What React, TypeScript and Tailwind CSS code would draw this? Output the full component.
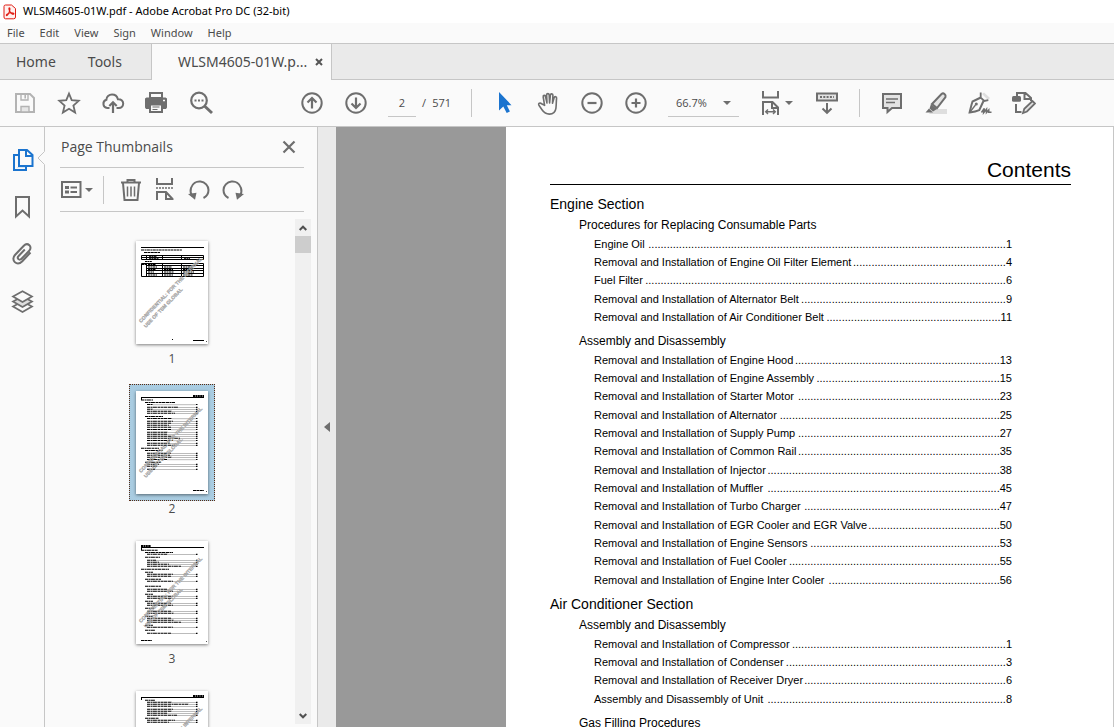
import type { ReactNode } from "react";
import { clsx } from "clsx";

const UI_FONT = "font-['Open_Sans','Noto_Sans',sans-serif]";
const CHROME_FONT = "font-['Noto_Sans','Open_Sans',sans-serif]";
const DOC_FONT = "font-['Liberation_Sans',Arial,sans-serif]";

// dots is the length of the leader between title and page number
type Entry = [title: string, dots: number, page: number];
type Group = { title: string; entries: Entry[] };
type Section = { title: string; groups: Group[] };

const SECTIONS: Section[] = [
  {
    title: "Engine Section",
    groups: [
      {
        title: "Procedures for Replacing Consumable Parts",
        entries: [
          ["Engine Oil", 117, 1],
          ["Removal and Installation of Engine Oil Filter Element", 50, 4],
          ["Fuel Filter", 118, 6],
          ["Removal and Installation of Alternator Belt", 67, 9],
          ["Removal and Installation of Air Conditioner Belt", 57, 11],
        ],
      },
      {
        title: "Assembly and Disassembly",
        entries: [
          ["Removal and Installation of Engine Hood", 67, 13],
          ["Removal and Installation of Engine Assembly", 60, 15],
          ["Removal and Installation of Starter Motor", 66, 23],
          ["Removal and Installation of Alternator", 72, 25],
          ["Removal and Installation of Supply Pump", 66, 27],
          ["Removal and Installation of Common Rail", 66, 35],
          ["Removal and Installation of Injector", 76, 38],
          ["Removal and Installation of Muffler", 76, 45],
          ["Removal and Installation of Turbo Charger", 64, 47],
          ["Removal and Installation of EGR Cooler and EGR Valve", 43, 50],
          ["Removal and Installation of Engine Sensors", 62, 53],
          ["Removal and Installation of Fuel Cooler", 69, 55],
          ["Removal and Installation of Engine Inter Cooler", 56, 56],
        ],
      },
    ],
  },
  {
    title: "Air Conditioner Section",
    groups: [
      {
        title: "Assembly and Disassembly",
        entries: [
          ["Removal and Installation of Compressor", 70, 1],
          ["Removal and Installation of Condenser", 72, 3],
          ["Removal and Installation of Receiver Dryer", 66, 6],
          ["Assembly and Disassembly of Unit", 78, 8],
        ],
      },
      { title: "Gas Filling Procedures", entries: [] },
    ],
  },
];

/* ---------- icons ---------- */

function Icon({ children, className }: { children: ReactNode; className?: string }) {
  return (
    <svg
      viewBox="0 0 24 24"
      className={clsx("size-6 shrink-0", className)}
      fill="none"
      stroke="currentColor"
      strokeWidth="2"
      aria-hidden="true"
    >
      {children}
    </svg>
  );
}

function IconButton({ label, children, className }: { label: string; children: ReactNode; className?: string }) {
  return (
    <button type="button" aria-label={label} className={clsx("flex shrink-0 items-center", className)}>
      {children}
    </button>
  );
}

function Caret() {
  return (
    <svg viewBox="0 0 8 4" className="h-1 w-2 shrink-0" fill="currentColor" aria-hidden="true">
      <path d="M0 0h8L4 4z" />
    </svg>
  );
}

const SaveIcon = () => (
  <Icon className="text-[#b3b3b3]">
    <path d="M3 3h14l4 4v14H3z" />
    <path d="M8 15.5h8V21H8z" fill="#e6e6e6" strokeWidth="1.4" />
    <path d="M8 3v6h7V3" strokeWidth="1.4" />
    <path d="M12.2 4v3.4" strokeWidth="1.6" />
  </Icon>
);

const StarIcon = () => (
  <Icon>
    <path
      d="M12 2.6l2.7 6.6 7 .6-5.3 4.7 1.7 7L12 17.7l-6.1 3.8 1.7-7L2.3 9.8l7-.6z"
      strokeWidth="1.8"
    />
  </Icon>
);

const CloudIcon = () => (
  <Icon>
    <path d="M8.5 17H6.2a4.2 4.2 0 0 1-.8-8.2C5.4 5.8 8 3.6 11 3.6s5.2 1.8 5.9 4.6c3-.3 5.3 1.7 5.3 4.4 0 2.5-1.9 4.4-4.3 4.4h-2.4" />
    <path d="M12 22V11.5M8.3 15l3.7-3.7 3.7 3.7" strokeWidth="2.2" />
  </Icon>
);

const PrintIcon = () => (
  <Icon>
    <path d="M4 1h14v6H4z" fill="currentColor" stroke="none" />
    <path d="M6 3h10v3H6z" fill="#fafafa" stroke="none" />
    <path d="M1.5 6.5h19L22 7.5v9L21 18h-3v-5H4v5H1l-1-1.5v-9z" fill="currentColor" stroke="none" />
    <path d="M5 13.5h12V21H5z" fill="#fafafa" />
    <path d="M7.5 16h7M7.5 18.5h5" strokeWidth="1.2" />
    <path d="M18 9.5h2" stroke="#fafafa" strokeWidth="1.5" />
  </Icon>
);

const SearchIcon = () => (
  <Icon>
    <circle cx="10" cy="9.5" r="7.8" strokeWidth="2.2" />
    <path d="M15.5 15l7.5 7" strokeWidth="3" />
    <path d="M5.5 9.5h2M9 9.5h2M12.5 9.5h2" strokeWidth="1.8" />
  </Icon>
);

const CircleIcon = ({ d }: { d: string }) => (
  <Icon>
    <circle cx="12" cy="12" r="9.7" />
    <path d={d} strokeWidth="2.2" />
  </Icon>
);

const CursorIcon = () => (
  <Icon className="text-[#1b74cf]">
    <path d="M7 1v18.5l4.3-3.9 3.4 6.4 3.2-1.6-3.1-6.2H19.5z" fill="currentColor" stroke="none" />
  </Icon>
);

const HandIcon = () => (
  <Icon>
    <path
      transform="translate(1.3 .8)"
      d="M7.3 13.5L5.9 5.2c-.3-1.9 1.9-2.3 2.3-.5l1.5 6.5-.4-8c0-1.9 2.5-1.9 2.6 0l.4 8 .8-8c.2-1.7 2.6-1.5 2.5.3l-.4 8 1.6-5.5c.5-1.8 2.8-1.3 2.5.5-.4 3-.2 6.5-.7 10-.5 3.6-2.8 5.8-6.5 5.8-4 0-5.7-1.8-7.4-4.3-1-1.5-2.2-3.3-3.1-4.6-1-1.7 1.2-2.8 2.6-1.5z"
      strokeWidth="1.6"
      strokeLinejoin="round"
    />
  </Icon>
);

const FitIcon = () => (
  <Icon>
    <path d="M4 0v6.5h15V0" />
    <path d="M4 24V11h9.5l5.5 5.5V24M13 11v6h6" />
    <path d="M7 20.8h9M9 18.5l-2.3 2.3L9 23M14 18.5l2.3 2.3L14 23" strokeWidth="1.4" />
  </Icon>
);

const KeyboardIcon = () => (
  <Icon>
    <path d="M2 2.5h20v7H2z" fill="#e3e3e3" />
    <path d="M5 6h14" strokeWidth="2" strokeDasharray="2 1.3" />
    <path d="M12 12v9.5M7.5 17.5l4.5 4.3 4.5-4.3" />
  </Icon>
);

const CommentIcon = () => (
  <Icon>
    <path d="M3 3h18v14H12l-4.5 4v-4H3z" fill="#e3e3e3" />
    <path d="M6 8h12M6 11.5h9" strokeWidth="1.3" />
  </Icon>
);

const HighlightIcon = () => (
  <Icon>
    <path d="M8 18h15v5H5z" fill="#dedede" stroke="none" />
    <path d="M8 13L17.5 3q1.5-1.2 3 0t1 3L13 17z" fill="#e3e3e3" />
    <path d="M7 13l6 5-4 2.5-3.5-3z" fill="currentColor" stroke="none" />
    <path d="M5 17.5l4 4H1.5z" fill="currentColor" stroke="none" />
  </Icon>
);

const SignIcon = () => (
  <Icon>
    <path d="M14 3l2-1.5 6 5.5-2 2z" fill="#dedede" stroke="none" />
    <path d="M12.8 6.5L4.5 10.5C3.3 14 2.5 18 1.6 21.4c3.4-.3 6.8-.8 9.6-2.2L15.5 10" />
    <path d="M12.7 1.5v5.2l3.6 3.3 4-.8" strokeWidth="1.8" />
    <path d="M2 21l5.5-7" strokeWidth="1.3" />
    <circle cx="8.3" cy="13" r="1.5" fill="currentColor" stroke="none" />
    <path d="M13.5 21.5l2.8-4-.5 4 2.7-3.2v3.2l2.2-2.5v2.3h2.8" strokeWidth="1.6" />
  </Icon>
);

const EditIcon = () => (
  <Icon>
    <path d="M5 5V2h8.5l5.5 5v3M12.5 2v6H19" />
    <path d="M4 13v8h5.5" />
    <rect x="0" y="5" width="9" height="5.8" rx="1.5" fill="currentColor" stroke="none" />
    <path d="M11 22l1.3-4.2L20.5 10l2.5 2.5-8 8z" fill="#e3e3e3" strokeWidth="1.8" />
  </Icon>
);

const PagesIcon = () => (
  <Icon className="text-[#1b74cf]">
    <path d="M7 7H3v15h12v-3" />
    <path d="M8 2h8l5.5 5v11H8zM15 2v6h6.5" fill="#fafafa" />
    <path d="M6 19.5h8" stroke="#d6e6f5" strokeWidth="1" />
  </Icon>
);

const BookmarkIcon = () => (
  <Icon>
    <path d="M5 2h13v19.5L11.5 15.5 5 21.5z" />
  </Icon>
);

const ClipIcon = () => (
  <Icon>
    <path d="M19.5 10.5l-8.2 8.8c-2.5 2.5-5.5 2.7-7.5.8s-1.9-5 .4-7.4l8.6-8.9c1.8-1.9 4.1-1.9 5.6-.5s1.5 3.7-.2 5.5l-7.7 8c-1 1-2.3 1.1-3.1.3s-.8-2.1.2-3.1l6.2-6.5" />
  </Icon>
);

const LayersIcon = () => (
  <Icon>
    <path d="M2 17.5l9.5 5.5 9.5-5.5-9.5-5z" fill="#fafafa" strokeWidth="1.7" />
    <path d="M2 12.5l9.5 5.5 9.5-5.5-9.5-5z" fill="#dedede" strokeWidth="1.7" />
    <path d="M2 7.5L11.5 13 21 7.5l-9.5-5.3z" fill="#fafafa" strokeWidth="1.7" />
  </Icon>
);

const ListIcon = () => (
  <Icon>
    <path d="M2 4h18.5v15H2z" />
    <path d="M5 9.5h4M5 14h4" strokeWidth="3" />
    <path d="M10.5 9.5h6.5M10.5 14h6.5" strokeWidth="1.8" />
  </Icon>
);

const TrashIcon = () => (
  <Icon>
    <path d="M2 4.500h20M8.500 4V2h7v2" />
    <path d="M4 5l1.500 17h13L20 5" />
    <path d="M8.500 8.500v10M12 8.500v10M15.500 8.500v10" strokeWidth="1.500" />
  </Icon>
);

const SplitIcon = () => (
  <Icon>
    <path d="M4 0v6h15V0" />
    <path d="M3 10h18" strokeWidth="1.5" strokeDasharray="2 1" />
    <path d="M4 22v-8h9l6.5 7v1M13 14v7h6.5" />
  </Icon>
);

const RotateIcon = ({ flip }: { flip?: boolean }) => (
  <Icon>
    <g transform={flip ? "matrix(-1 0 0 1 24 0)" : undefined}>
      <path d="M5.2 18C3.5 15.5 3.2 12.5 4 10c1.5-4.5 5.5-7 9.5-6.5 4.5.5 8 4.5 8 8.5 0 3.5-2 6.5-5 8" />
      <path d="M1 16l8.5-1.3-1.5 7z" fill="currentColor" stroke="none" />
    </g>
  </Icon>
);

const AcrobatIcon = () => (
  <svg viewBox="0 0 14 16" className="h-4 w-[14px] shrink-0 text-[#e01b12]" fill="none" stroke="currentColor" aria-hidden="true">
    <path d="M2.5 1h6L12.5 4.5V13q0 1.800-1.800 1.800H2.500Q1 14.800 1 13V2.500Q1 1 2.500 1z" fill="#fff1ef" />
    <path
      d="M3.500 11.500C2.500 10.800 5.500 9 8 8.800c2.500-.2 3.500 1 2.600 1.400-1 .5-3-1.200-4-3.200-.8-1.700-.9-3.300-.2-3.300s.7 1.500.1 3.600C5.700 9.600 4.300 12 3.500 11.500z"
      strokeWidth="1.1"
    />
  </svg>
);

/* ---------- thumbnails ---------- */

// [y, x, width, leader?]
type Mark = [number, number, number, boolean?];

const MARKS_2: Mark[] = [
  [9, 5, 12], [11.5, 9, 30],
  [13.5, 11, 6, true], [16.3, 11, 31, true], [18.3, 11, 6, true], [20.3, 11, 25, true], [22.3, 11, 28, true],
  [25.5, 9, 18],
  [27.5, 11, 25, true], [30.3, 11, 26, true], [32.3, 11, 24, true], [34.3, 11, 22, true], [36.3, 11, 24, true],
  [38.5, 11, 24, true], [41.3, 11, 21, true], [43.3, 11, 20, true], [45.3, 11, 25, true], [47.3, 11, 33, true],
  [49.5, 11, 26, true], [52.3, 11, 23, true], [54.3, 11, 28, true],
  [57.3, 5, 18], [59.5, 9, 18],
  [62.3, 11, 24, true], [64.3, 11, 23, true], [66.3, 11, 25, true], [68.5, 11, 20, true],
  [71.3, 9, 16], [73.3, 11, 12, true], [75.3, 11, 10, true], [78.3, 11, 8, true],
];

const MARKS_3: Mark[] = [
  [9.3, 5, 17], [11.5, 9, 28], [13.3, 11, 21, true], [16.3, 9, 15],
  [19.3, 11, 9, true], [21.3, 11, 12, true], [23.3, 11, 22, true], [25.3, 11, 34, true],
  [28.3, 5, 28], [31.3, 9, 8], [33.3, 11, 26, true], [35.3, 11, 24, true],
  [38.3, 9, 16], [40.3, 11, 26, true], [45.3, 9, 16], [48.3, 11, 20, true], [50.3, 11, 26, true],
  [53.3, 9, 8], [55.3, 11, 26, true], [57.3, 11, 24, true], [60.3, 9, 8], [62.3, 11, 24, true],
  [64.3, 11, 26, true], [67.3, 9, 9], [70.3, 11, 24, true], [72.3, 11, 27, true], [75.3, 9, 8],
  [77.3, 11, 24, true], [79.3, 11, 27, true], [81.3, 11, 34, true], [84.3, 9, 8], [86.3, 11, 26, true],
  [89.3, 9, 10], [92.3, 11, 24, true],
];

const MARKS_4: Mark[] = [
  [9.3, 9, 10], [11.3, 11, 25, true], [13.3, 11, 42, true], [15.3, 11, 24, true], [18.3, 11, 26, true],
  [20.3, 11, 25, true], [22.3, 11, 20, true], [24.3, 11, 30, true], [27.3, 9, 14],
  [29.3, 11, 28, true], [31.3, 11, 22, true],
];

function Watermark() {
  return (
    <g
      fill="#a3a3a3"
      fillOpacity=".9"
      fontFamily="'Liberation Sans Narrow','Liberation Sans',sans-serif"
      fontSize="5"
      fontWeight="700"
      stroke="#a3a3a3"
      strokeWidth=".3"
    >
      <text transform="translate(5 82) rotate(-46)">CONFIDENTIAL: FOR THE INTERNAL</text>
      <text transform="translate(10 87) rotate(-46)">USE OF TSM GLOBAL</text>
    </g>
  );
}

function TextPage({ marks, headLeft }: { marks: Mark[]; headLeft?: boolean }) {
  return (
    <g stroke="#000" fill="none">
      <path d={headLeft ? "M5 5h10" : "M57 5h11"} strokeWidth="2" strokeDasharray="2 .4" />
      <path d="M5 6.5h63M5.5 6v3" />
      {marks.map(([y, x, w, leader]) => (
        <g key={y}>
          <path d={`M${x} ${y}h${w}`} strokeWidth="1.1" strokeDasharray="3 .5 2 .4 4 .6" />
          {leader && <path d={`M${x + w} ${y + 0.2}H60`} stroke="#777" strokeWidth=".5" />}
          {leader && <path d={`M60 ${y}h1.5`} strokeWidth="1.2" />}
        </g>
      ))}
      <path d={headLeft ? "M5 99.5h11" : "M57 99.5h11"} strokeDasharray="3 .4" />
      <path d="M70 100.5h1" stroke="#555" />
    </g>
  );
}

function TablePage() {
  return (
    <g stroke="#000" fill="none">
      <path d="M5 6.5h63" />
      <path d="M5 9h41" strokeDasharray="3 .5 2 .4" />
      <path d="M8 11.5h16" strokeDasharray="3 .4" />
      <path d="M5.5 14.5h62v4h-62z" />
      <path d="M5 16.5h63M10.5 14v4M26.5 14v4M45.5 14v4" />
      <path d="M13 15.5h8M13 17.5h10M48 17.5h6" strokeWidth=".8" strokeDasharray="2 .5" />
      <path d="M9 20.5h7" strokeDasharray="2 .4" />
      <path d="M5.5 22.500h62v13h-62z" />
      <path d="M10 24.5h58M10 27.5h58M10 29.5h58M10 32.5h58M10.5 22v13M26.5 22v13M45.5 22v13" />
      <path
        d="M6 23.5h4M12 23.5h8M12 26h9M28 26h8M47 26h10M12 28.500h8M28 28.500h9M47 28.500h10M28 31h10M47 31h11M12 31h6M28 34h9M47 34h10M12 34h9"
        strokeDasharray="2 .5"
      />
      <path d="M36 98.5h1M57 99.5h11" />
      <path d="M70 100.5h1" stroke="#555" />
    </g>
  );
}

function Thumbnail({ page, selected, children }: { page: number; selected?: boolean; children: ReactNode }) {
  return (
    <li className="shrink-0">
      <button type="button" aria-label={`Page ${page}`} className="flex flex-col items-center">
        <span
          className={clsx(
            "flex h-[117px] w-[86px] items-center justify-center border border-dotted",
            selected ? "border-[#5a2b12] bg-[#a9cce1]" : "border-transparent",
          )}
        >
          <svg
            viewBox="0 0 72 103"
            className="h-[103px] w-[72px] bg-white shadow-[0_1px_3px_rgba(0,0,0,0.5)]"
            aria-hidden="true"
          >
            {children}
            <Watermark />
          </svg>
        </span>
        <span className="text-xs leading-4 text-[#4b4b4b]">{page}</span>
      </button>
    </li>
  );
}

/* ---------- window parts ---------- */

function TitleBar() {
  return (
    <header className={CHROME_FONT}>
      <div className="flex h-[23px] items-center gap-[6px] bg-white px-[3px]">
        <AcrobatIcon />
        <h1 className="text-[11px] text-black">WLSM4605-01W.pdf - Adobe Acrobat Pro DC (32-bit)</h1>
      </div>
      <nav className="flex h-5 items-center gap-[15px] bg-[#fafafa] px-[7px] text-[11px] text-[#4b4b4b]">
        {["File", "Edit", "View", "Sign", "Window", "Help"].map((m) => (
          <button key={m} type="button">
            {m}
          </button>
        ))}
      </nav>
    </header>
  );
}

function TabBar() {
  return (
    <div className={clsx("flex h-[37px] border-y border-[#c6c6c6] bg-[#eaeaea] text-sm text-[#4b4b4b]", CHROME_FONT)}>
      <button type="button" className="px-4">
        Home
      </button>
      <button type="button" className="pr-[29px] pl-4">
        Tools
      </button>
      <div className="-mb-px flex items-center gap-2 border-x border-[#c6c6c6] bg-[#fafafa] pr-2 pl-[26px]">
        <button type="button">WLSM4605-01W.p...</button>
        <button type="button" aria-label="Close tab">
          <svg viewBox="0 0 8 8" className="size-2" stroke="#555" strokeWidth="2" aria-hidden="true">
            <path d="M1 1l6 6M7 1L1 7" />
          </svg>
        </button>
      </div>
    </div>
  );
}

function Divider() {
  return <span className="h-7 w-px shrink-0 bg-[#c6c6c6]" />;
}

function Toolbar() {
  return (
    <div className="flex h-[47px] items-center gap-[87px] border-b border-[#c6c6c6] bg-[#fafafa] pl-[13px] text-[#6e6e6e]">
      <div className="flex items-center gap-5">
        <IconButton label="Save"><SaveIcon /></IconButton>
        <IconButton label="Star"><StarIcon /></IconButton>
        <IconButton label="Upload to cloud"><CloudIcon /></IconButton>
        <IconButton label="Print"><PrintIcon /></IconButton>
        <IconButton label="Find"><SearchIcon /></IconButton>
      </div>
      <div className="flex items-center gap-5">
        <IconButton label="Previous page"><CircleIcon d="M12 17.5V7.5M7.5 11.5L12 7l4.5 4.5" /></IconButton>
        <IconButton label="Next page"><CircleIcon d="M12 6.5v10M7.5 12.5L12 17l4.5-4.5" /></IconButton>
        <div className="flex items-center gap-[6px] text-[11px] text-[#4b4b4b]">
          <input
            aria-label="Page number"
            defaultValue="2"
            className="h-7 w-7 border-b border-[#c6c6c6] bg-transparent text-center outline-none"
          />
          <span className="flex w-[29px] justify-between">
            <span>/</span>
            <span>571</span>
          </span>
        </div>
        <Divider />
        <IconButton label="Select"><CursorIcon /></IconButton>
        <IconButton label="Pan"><HandIcon /></IconButton>
        <IconButton label="Zoom out"><CircleIcon d="M7.5 12h9" /></IconButton>
        <IconButton label="Zoom in"><CircleIcon d="M7.5 12h9M12 7.5v9" /></IconButton>
        <div className="relative">
          <select
            aria-label="Zoom level"
            className="h-7 w-[71px] appearance-none border-b border-[#c6c6c6] bg-transparent pl-2 text-[11px] text-[#4b4b4b] outline-none"
          >
            <option>66.7%</option>
          </select>
          <span className="pointer-events-none absolute inset-y-0 right-2 flex items-center">
            <Caret />
          </span>
        </div>
        <IconButton label="Fit width" className="gap-[2px] pr-[2px]">
          <FitIcon />
          <Caret />
        </IconButton>
        <IconButton label="Show toolbar"><KeyboardIcon /></IconButton>
        <Divider />
        <IconButton label="Comment"><CommentIcon /></IconButton>
        <IconButton label="Highlight"><HighlightIcon /></IconButton>
        <IconButton label="Sign"><SignIcon /></IconButton>
        <IconButton label="Edit"><EditIcon /></IconButton>
      </div>
    </div>
  );
}

function SideRail() {
  return (
    <nav className="relative flex w-[45px] shrink-0 flex-col gap-[23px] border-r border-[#c6c6c6] pt-[21px] pl-[11px] text-[#6e6e6e]">
      <IconButton label="Page thumbnails"><PagesIcon /></IconButton>
      <IconButton label="Bookmarks"><BookmarkIcon /></IconButton>
      <IconButton label="Attachments"><ClipIcon /></IconButton>
      <IconButton label="Layers"><LayersIcon /></IconButton>
      <svg viewBox="0 0 8 14" className="absolute top-6 -right-px h-[14px] w-2" aria-hidden="true">
        <path d="M8 0L1 7l7 7z" fill="#fafafa" />
        <path d="M7.5.5L1 7l6.5 6.5" fill="none" stroke="#c6c6c6" />
      </svg>
    </nav>
  );
}

function ScrollBar() {
  return (
    <div className="mt-[7px] mb-[3px] flex w-4 shrink-0 flex-col bg-[#f0f0f0] text-[#505050]">
      <button type="button" aria-label="Scroll up" className="flex h-[17px] items-center justify-center">
        <svg viewBox="0 0 8 6" className="h-[6px] w-2" fill="none" stroke="currentColor" strokeWidth="2" aria-hidden="true">
          <path d="M.7 5L4 1.7 7.3 5" />
        </svg>
      </button>
      <span className="h-[17px] bg-[#cdcdcd]" />
      <button type="button" aria-label="Scroll down" className="mt-auto flex h-[17px] items-center justify-center">
        <svg viewBox="0 0 8 6" className="h-[6px] w-2" fill="none" stroke="currentColor" strokeWidth="2" aria-hidden="true">
          <path d="M.7 1L4 4.3 7.3 1" />
        </svg>
      </button>
    </div>
  );
}

function ThumbnailPanel() {
  return (
    <aside className="flex w-[273px] shrink-0 flex-col border-r border-[#c6c6c6] text-[#6e6e6e]">
      <div className="mr-[13px] ml-[15px] flex h-[41px] items-center justify-between border-b border-[#c6c6c6] pr-2 pl-px">
        <h2 className="text-sm text-[#4b4b4b]">Page Thumbnails</h2>
        <button type="button" aria-label="Close panel">
          <svg viewBox="0 0 14 14" className="size-[14px]" stroke="currentColor" strokeWidth="2.2" aria-hidden="true">
            <path d="M1.5 1.5l11 11M12.5 1.5l-11 11" />
          </svg>
        </button>
      </div>
      <div className="mr-[13px] ml-[15px] flex h-11 items-center gap-[10px] border-b border-[#c6c6c6]">
        <IconButton label="Options" className="gap-px">
          <ListIcon />
          <Caret />
        </IconButton>
        <Divider />
        <span className="flex items-center gap-[10px] pl-[5px]">
          <IconButton label="Delete pages"><TrashIcon /></IconButton>
          <IconButton label="Split document"><SplitIcon /></IconButton>
          <IconButton label="Rotate left"><RotateIcon /></IconButton>
          <IconButton label="Rotate right"><RotateIcon flip /></IconButton>
        </span>
      </div>
      <div className="flex min-h-0 flex-1 pr-[6px]">
        <ul className="flex flex-1 flex-col items-center gap-[17px] overflow-hidden pt-[22px] pl-1">
          <Thumbnail page={1}>
            <TablePage />
          </Thumbnail>
          <Thumbnail page={2} selected>
            <TextPage marks={MARKS_2} />
          </Thumbnail>
          <Thumbnail page={3}>
            <TextPage marks={MARKS_3} headLeft />
          </Thumbnail>
          <Thumbnail page={4}>
            <TextPage marks={MARKS_4} />
          </Thumbnail>
        </ul>
        <ScrollBar />
      </div>
    </aside>
  );
}

function TocEntry({ entry: [title, dots, page] }: { entry: Entry }) {
  return (
    <li className="flex whitespace-nowrap leading-[18px] nth-[3n]:leading-[19px]">
      <span>{title}</span>
      <span className="ml-auto">{".".repeat(dots)}</span>
      <span>{page}</span>
    </li>
  );
}

function DocumentPage() {
  return (
    <article className={clsx("w-[608px] shrink-0 overflow-hidden border-r border-[#c6c6c6] bg-white pr-[42px] pl-11 text-black", DOC_FONT)}>
      <h2 className="border-b border-black pt-[29px] text-right text-[21px] leading-7">Contents</h2>
      <div className="pt-[9px] pr-[59px]">
        {SECTIONS.map((s) => (
          <section key={s.title} className="mb-[5px]">
            <h3 className="text-sm leading-[21px]">{s.title}</h3>
            <div className="flex flex-col gap-[5px] pl-[29px]">
              {s.groups.map((g) => (
                <div key={g.title}>
                  <h4 className="text-xs leading-5">{g.title}</h4>
                  <ul className="pl-[15px] text-[11px]">
                    {g.entries.map((e) => (
                      <TocEntry key={e[0]} entry={e} />
                    ))}
                  </ul>
                </div>
              ))}
            </div>
          </section>
        ))}
      </div>
    </article>
  );
}

export default function App() {
  return (
    <div className={clsx("flex h-screen flex-col overflow-hidden bg-[#fafafa]", UI_FONT)}>
      <TitleBar />
      <TabBar />
      <Toolbar />
      <main className="flex min-h-0 flex-1">
        <SideRail />
        <ThumbnailPanel />
        <button type="button" aria-label="Collapse panel" className="flex w-[18px] shrink-0 items-center justify-center bg-[#eaeaea]">
          <svg viewBox="0 0 6 10" className="h-[10px] w-[6px]" fill="#6e6e6e" aria-hidden="true">
            <path d="M6 0v10L0 5z" />
          </svg>
        </button>
        <div className="flex min-w-0 flex-1 justify-end bg-[#999]">
          <DocumentPage />
        </div>
      </main>
    </div>
  );
}
